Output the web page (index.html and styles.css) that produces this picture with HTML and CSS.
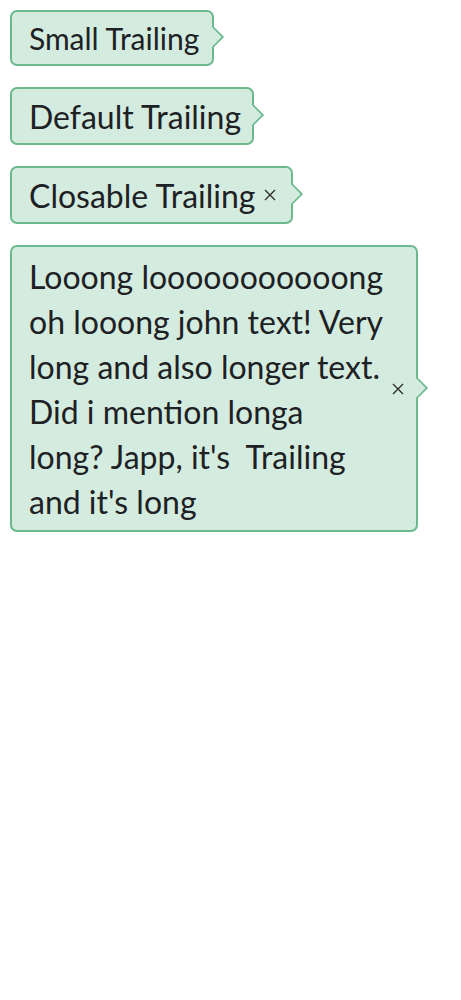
FILE: index.html
```html
<!DOCTYPE html>
<html lang="en">
<head>
<meta charset="utf-8">
<title>Tags</title>
<link rel="stylesheet" href="styles.css">
</head>
<body>
<div class="stack">
  <div class="tag tag--small"><span class="tag__text">Small Trailing</span></div>
  <div class="tag"><span class="tag__text">Default Trailing</span></div>
  <div class="tag tag--closable"><span class="tag__text">Closable Trailing</span><button class="tag__close" aria-label="Close"><svg viewBox="0 0 12 12" width="12" height="12"><path d="M1 1L11 11M11 1L1 11" stroke="#2b2b2b" stroke-width="1.3" fill="none"/></svg></button></div>
  <div class="tag tag--closable tag--long"><span class="tag__text">Looong looooooooooong oh looong john text! Very long and also longer text. Did i mention longa long? Japp, it's&nbsp; Trailing and it's long</span><button class="tag__close" aria-label="Close"><svg viewBox="0 0 12 12" width="12" height="12"><path d="M1 1L11 11M11 1L1 11" stroke="#2b2b2b" stroke-width="1.3" fill="none"/></svg></button></div>
</div>
</body>
</html>
```
FILE: styles.css
```css
html, body {
  margin: 0;
  padding: 0;
  background: #ffffff;
}
body {
  font-family: Lato, "Open Sans", sans-serif;
  color: #1e2124;
}
.stack {
  display: flex;
  flex-direction: column;
  align-items: flex-start;
  gap: 21px;
  padding: 10px 0 0 10px;
}
.tag {
  position: relative;
  display: inline-flex;
  align-items: center;
  box-sizing: border-box;
  background: #d4ebdf;
  border: 2px solid #6cb98e;
  border-radius: 7px;
  padding: 4.5px 11px 4.5px 17px;
  font-size: 32px;
  line-height: 45px;
}
.tag--small {
  font-size: 30px;
  padding-top: 3.5px;
  padding-bottom: 3.5px;
  padding-right: 13px;
}
.tag::after {
  content: "";
  position: absolute;
  right: -9px;
  top: 50%;
  width: 14px;
  height: 14px;
  margin-top: -9px;
  background: #d4ebdf;
  border-top: 2px solid #6cb98e;
  border-right: 2px solid #6cb98e;
  transform: rotate(45deg);
  border-top-right-radius: 2px;
}
.tag__close {
  display: flex;
  align-items: center;
  justify-content: center;
  margin: 0 0 0 8px;
  padding: 0;
  border: 0;
  background: transparent;
  width: 12px;
  height: 12px;
  flex: none;
}
.tag--closable {
  padding-right: 15px;
}
.tag--long {
  width: 408px;
  padding-top: 6.5px;
  padding-bottom: 6.5px;
  padding-right: 12px;
}
.tag--long .tag__text {
  flex: 1;
}
.tag--long .tag__close {
  margin-left: 6px;
}
```
